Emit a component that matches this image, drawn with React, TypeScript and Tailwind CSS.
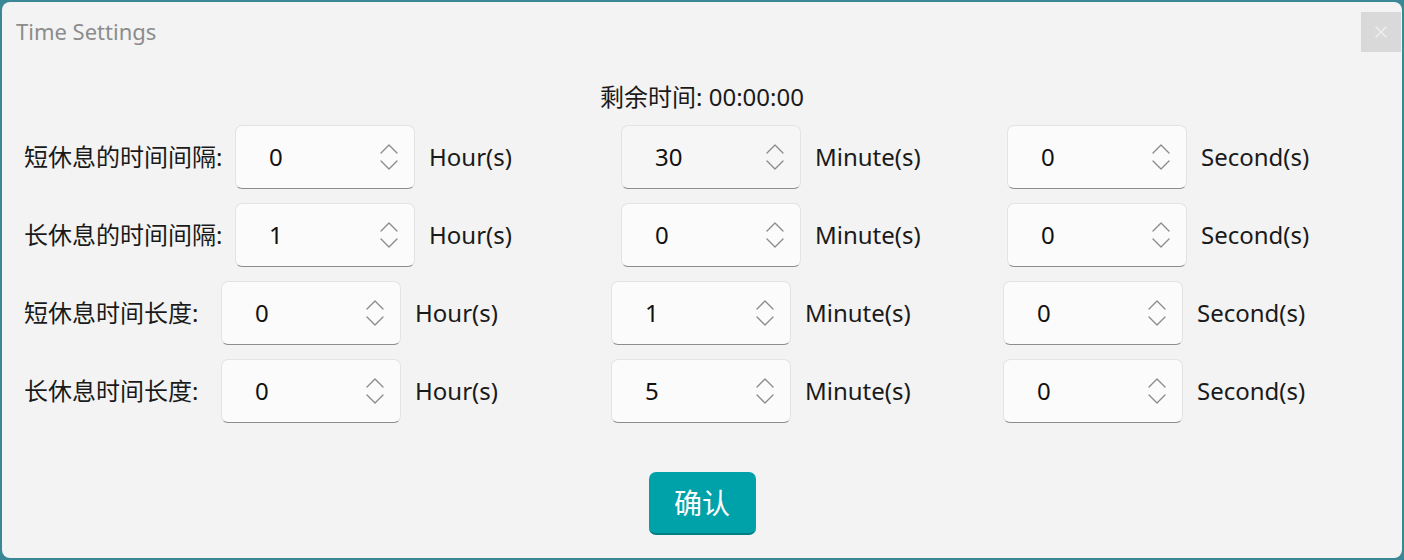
import React from "react";

const FONT = { fontFamily: '"Noto Sans", "Open Sans", "Noto Sans CJK SC", sans-serif' };

function Chevrons() {
  return (
    <svg width="18" height="28" viewBox="0 0 18 28" fill="none" stroke="#8a8a8a" strokeWidth="1.3" strokeLinecap="round" strokeLinejoin="round">
      <polyline points="1,10 9,2 17,10" />
      <polyline points="1,18 9,26 17,18" />
    </svg>
  );
}

function Spin({ value, hover }: { value: string; hover?: boolean }) {
  return (
    <div
      className={`flex h-[64px] w-[180px] shrink-0 items-center justify-between rounded-[7px] border border-[#e3e3e3] border-b-[#8d8d8d] pl-[33px] pr-[16px] ${
        hover ? "bg-[#f6f6f6]" : "bg-[#fbfbfb]"
      }`}
    >
      <span className="text-[24px] leading-none text-[#111]">{value}</span>
      <Chevrons />
    </div>
  );
}

function Cell({ value, unit, w, hover }: { value: string; unit: string; w: string; hover?: boolean }) {
  return (
    <div className={`flex shrink-0 items-center gap-[14px] ${w}`}>
      <Spin value={value} hover={hover} />
      <span className="text-[24px] leading-none text-[#1a1a1a]">{unit}</span>
    </div>
  );
}

export default function App() {
  return (
    <div className="h-[560px] w-[1404px] bg-[#3a8796] p-[2px]" style={FONT}>
      <div className="flex h-full w-full flex-col rounded-[8px] bg-[#f3f3f3]">
        <div className="flex h-[50px] items-start justify-between">
          <div className="pl-[14px] pt-[14px] text-[22px] leading-[30px] text-[#8c8c8c]">Time Settings</div>
          <div className="mr-[1px] mt-[10px] flex h-[40px] w-[40px] items-center justify-center bg-[#d9d9d9]">
            <svg width="12" height="12" viewBox="0 0 12 12" stroke="#eeeeee" strokeWidth="1.6" strokeLinecap="round">
              <line x1="1" y1="1" x2="11" y2="11" />
              <line x1="11" y1="1" x2="1" y2="11" />
            </svg>
          </div>
        </div>
        <div className="mt-[30px] text-center text-[24px] leading-[30px] text-[#1a1a1a]">剩余时间: 00:00:00</div>
        <div className="mt-[13px] flex flex-col gap-[14px]">
          <div className="flex items-center pl-[22px]">
            <div className="w-[211px] shrink-0 text-[24px] leading-none text-[#1a1a1a]">短休息的时间间隔:</div>
            <Cell value="0" unit="Hour(s)" w="w-[386px]" />
            <Cell value="30" unit="Minute(s)" w="w-[386px]" hover />
            <Cell value="0" unit="Second(s)" w="w-[386px]" />
          </div>
          <div className="flex items-center pl-[22px]">
            <div className="w-[211px] shrink-0 text-[24px] leading-none text-[#1a1a1a]">长休息的时间间隔:</div>
            <Cell value="1" unit="Hour(s)" w="w-[386px]" />
            <Cell value="0" unit="Minute(s)" w="w-[386px]" />
            <Cell value="0" unit="Second(s)" w="w-[386px]" />
          </div>
          <div className="flex items-center pl-[22px]">
            <div className="w-[197px] shrink-0 text-[24px] leading-none text-[#1a1a1a]">短休息时间长度:</div>
            <Cell value="0" unit="Hour(s)" w="w-[390px]" />
            <Cell value="1" unit="Minute(s)" w="w-[392px]" />
            <Cell value="0" unit="Second(s)" w="w-[392px]" />
          </div>
          <div className="flex items-center pl-[22px]">
            <div className="w-[197px] shrink-0 text-[24px] leading-none text-[#1a1a1a]">长休息时间长度:</div>
            <Cell value="0" unit="Hour(s)" w="w-[390px]" />
            <Cell value="5" unit="Minute(s)" w="w-[392px]" />
            <Cell value="0" unit="Second(s)" w="w-[392px]" />
          </div>
        </div>
        <div className="mt-[49px] flex justify-center">
          <div className="flex h-[63px] w-[107px] items-center justify-center rounded-[7px] border-b-2 border-[#007d85] bg-[#00a2aa] text-[28px] leading-none text-white">
            确认
          </div>
        </div>
      </div>
    </div>
  );
}
